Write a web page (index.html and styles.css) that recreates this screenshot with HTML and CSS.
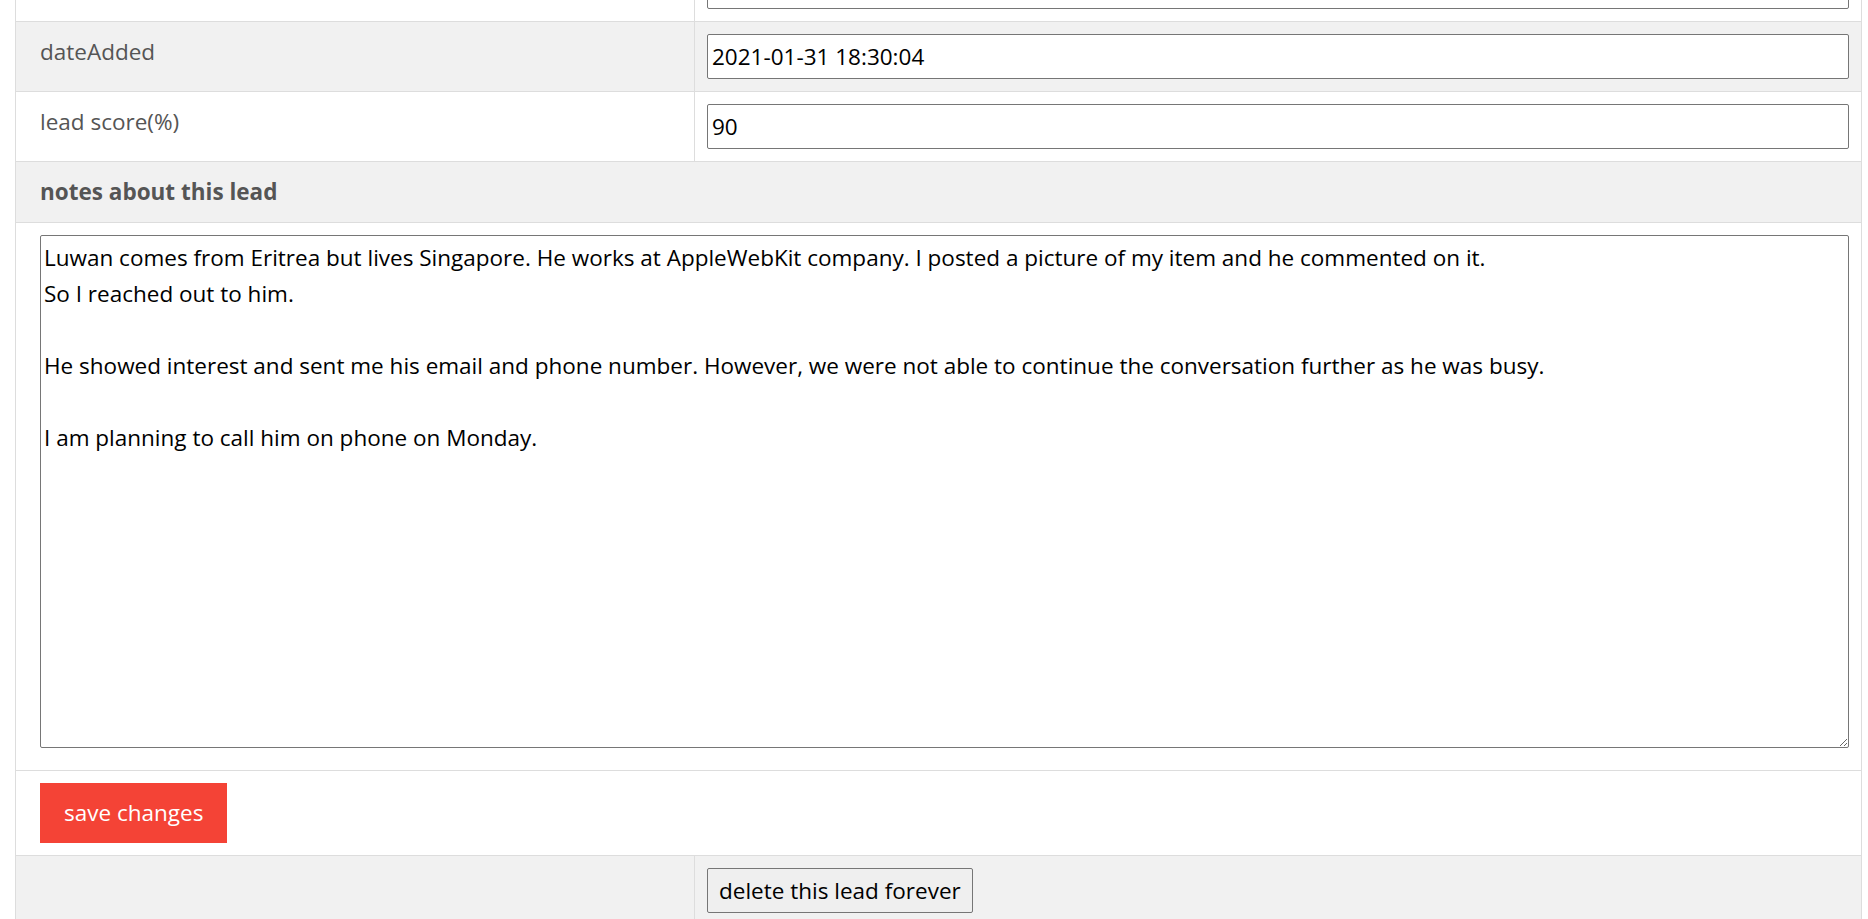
FILE: index.html
```html
<!DOCTYPE html>
<html lang="en">
<head>
<meta charset="utf-8">
<title>Edit lead</title>
<link rel="stylesheet" href="styles.css">
</head>
<body>
<form class="sheet">
  <div class="row">
    <div class="label"></div>
    <div class="field"><input class="text-input" type="text" value=""></div>
  </div>
  <div class="row grey">
    <div class="label">dateAdded</div>
    <div class="field"><input class="text-input" type="text" value="2021-01-31 18:30:04"></div>
  </div>
  <div class="row">
    <div class="label">lead score(%)</div>
    <div class="field"><input class="text-input" type="text" value="90"></div>
  </div>
  <div class="row full grey">
    <div class="heading">notes about this lead</div>
  </div>
  <div class="row full">
    <div class="notes-cell"><textarea class="notes">Luwan comes from Eritrea but lives Singapore. He works at AppleWebKit company. I posted a picture of my item and he commented on it.
So I reached out to him.

He showed interest and sent me his email and phone number. However, we were not able to continue the conversation further as he was busy.

I am planning to call him on phone on Monday.</textarea></div>
  </div>
  <div class="row full">
    <div class="action-cell"><button type="button" class="btn-save">save changes</button></div>
  </div>
  <div class="row grey">
    <div class="label"></div>
    <div class="field"><button type="button" class="btn-delete">delete this lead forever</button></div>
  </div>
</form>
</body>
</html>
```

FILE: styles.css
```css
html, body {
  margin: 0;
  padding: 0;
  background: #fff;
  overflow: hidden;
}

body {
  font-family: "Open Sans", "Liberation Sans", sans-serif;
  font-size: 22.5px;
  line-height: 36px;
  color: #555;
}

.sheet {
  margin: -48px 0 0 15px;
  width: 1847px;
  box-sizing: border-box;
  border-left: 1px solid #ddd;
  border-right: 1px solid #ddd;
}

.row {
  display: grid;
  grid-template-columns: 679px 1fr;
  border-bottom: 1px solid #ddd;
  background: #fff;
}

.row.grey {
  background: #f1f1f1;
}

.row.full {
  grid-template-columns: 1fr;
}

.label {
  border-right: 1px solid #ddd;
  padding: 12px 12px 12px 24px;
  color: #555;
}

.field {
  padding: 12px;
}

.text-input {
  display: block;
  width: 100%;
  height: 45px;
  box-sizing: border-box;
  margin: 0;
  padding: 0 4px;
  border: 1px solid #767676;
  border-radius: 2px;
  background: #fff;
  font-family: "Open Sans", "Liberation Sans", sans-serif;
  font-size: 22.5px;
  color: #000;
}

.heading {
  padding: 12px 24px;
  font-weight: 700;
  color: #555;
}

.notes-cell {
  padding: 12px 12px 22px 24px;
}

.notes {
  display: block;
  width: 100%;
  height: 513px;
  box-sizing: border-box;
  margin: 0;
  padding: 4px 3px;
  border: 1px solid #767676;
  border-radius: 2px;
  font-family: "Open Sans", "Liberation Sans", sans-serif;
  font-size: 22.5px;
  line-height: 36px;
  color: #000;
  background: #fff;
  resize: both;
}

.action-cell {
  padding: 12px 24px;
}

.btn-save {
  display: block;
  height: 60px;
  margin: 0;
  padding: 0 24px;
  border: none;
  background: #f44336;
  color: #fff;
  font-family: "Open Sans", "Liberation Sans", sans-serif;
  font-size: 22.5px;
  line-height: 36px;
  cursor: pointer;
}

.btn-delete {
  display: block;
  height: 45px;
  margin: 0;
  padding: 0 11px;
  border: 1px solid #767676;
  border-radius: 2px;
  background: #efefef;
  color: #000;
  font-family: "Open Sans", "Liberation Sans", sans-serif;
  font-size: 22.5px;
  line-height: 30px;
  cursor: pointer;
}
```
